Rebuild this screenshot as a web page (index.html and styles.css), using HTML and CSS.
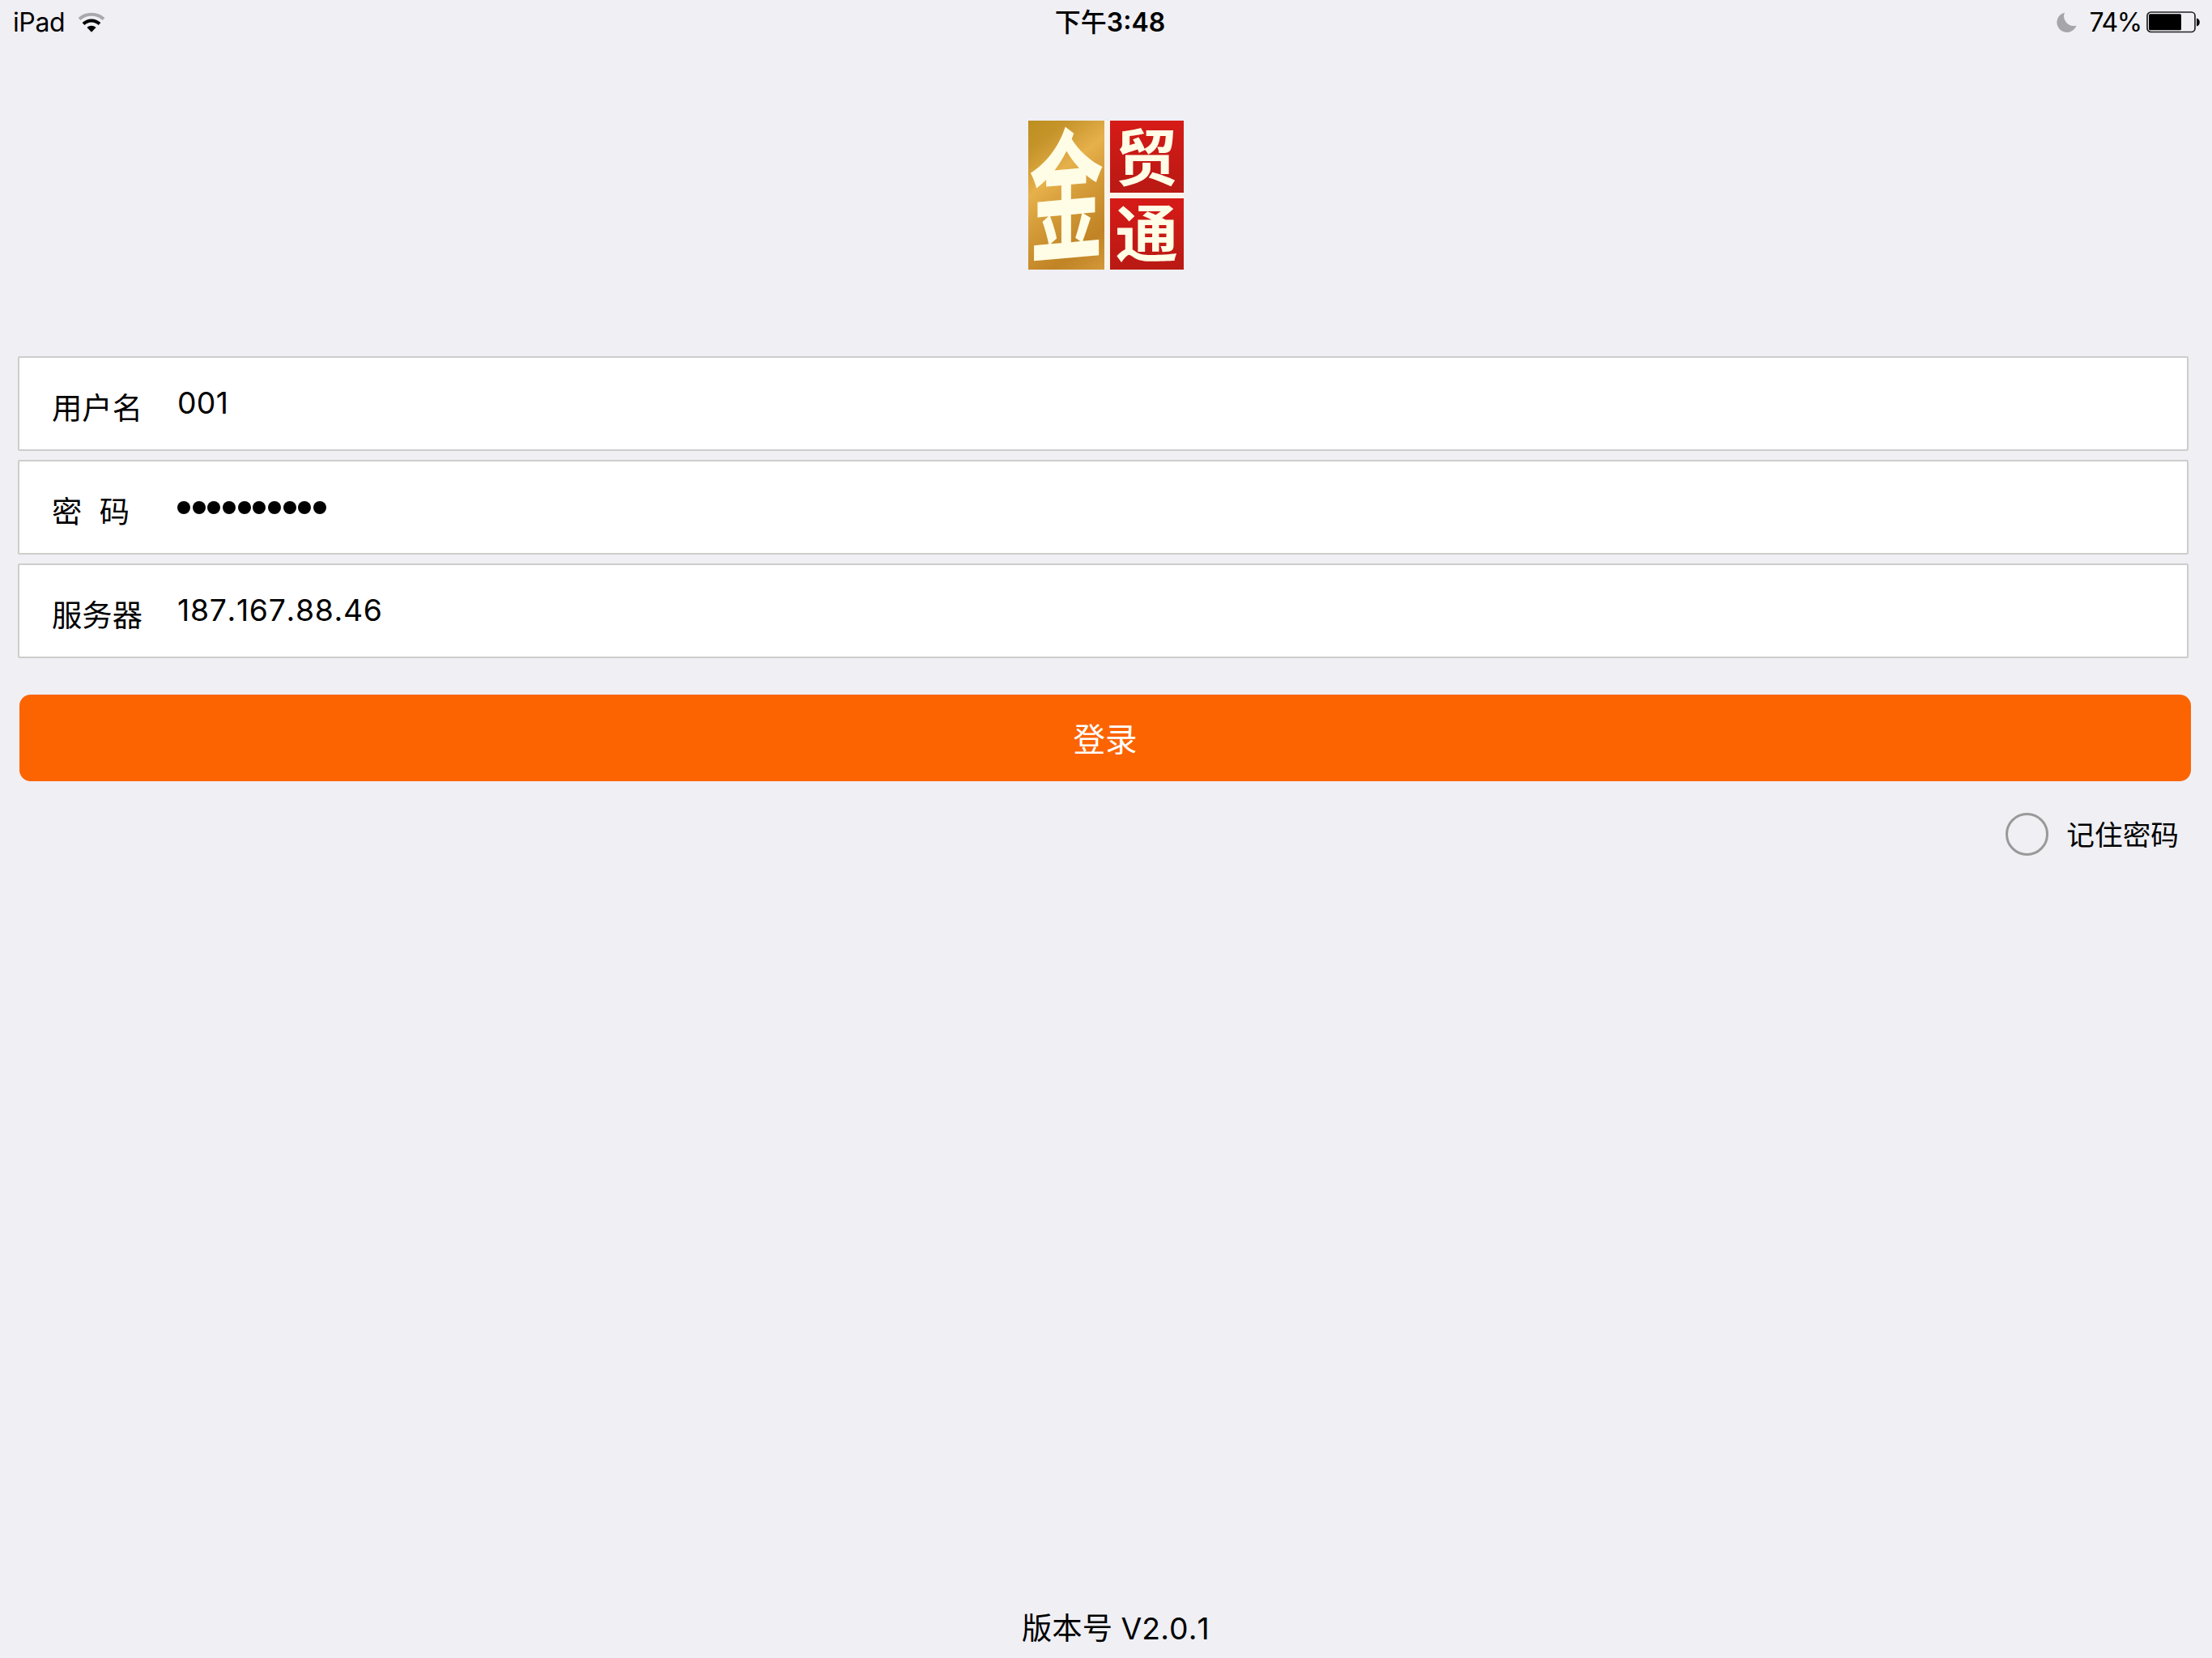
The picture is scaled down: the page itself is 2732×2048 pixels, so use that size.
FILE: index.html
```
<!DOCTYPE html>
<html lang="zh-CN">
<head>
<meta charset="utf-8">
<title>金贸通</title>
<link rel="stylesheet" href="styles.css">
</head>
<body>
<div class="screen">
  <header class="status">
    <div class="status-left">
      <span class="device">iPad</span>
      <svg class="wifi" width="34" height="26" viewBox="0 0 34 26" fill="none">
        <path d="M2 8.5C10.5 .8 23.500 .8 32 8.500" stroke="#a9a9ad" stroke-width="4"/>
        <path d="M7 14.500C12.500 9 21.500 9 27 14.500" stroke="#000" stroke-width="4"/>
        <path d="M11.500 19C14.500 16 19.500 16 22.500 19L17 24.800Z" fill="#000"/>
      </svg>
    </div>
    <div class="clock">下午<b>3:48</b></div>
    <div class="status-right">
      <svg class="moon" width="25" height="25" viewBox="0 0 25 25"><path d="M10 .5A12.400 12.400 0 1 0 24.600 16.500A12 12 0 0 1 10 .5Z" fill="#a5a5aa"/></svg>
      <span class="percent">74%</span>
      <svg class="battery" width="67" height="27" viewBox="0 0 67 27">
        <rect x="1" y="1" width="59" height="24.500" rx="4.500" fill="none" stroke="#222" stroke-width="1.700"/>
        <rect x="3" y="3.200" width="40" height="20" rx="1.500" fill="#000"/>
        <path d="M62 8.500C67 9.500 67 17.500 62 18.500Z" fill="#000"/>
      </svg>
    </div>
  </header>

  <svg class="logo" width="192" height="184" viewBox="0 0 192 184">
    <defs>
      <linearGradient id="gold" gradientUnits="userSpaceOnUse" x1="0" y1="0" x2="127" y2="159">
        <stop offset="0" stop-color="#bd8f20"/>
        <stop offset=".15" stop-color="#c5942a"/>
        <stop offset=".36" stop-color="#e6b04b"/>
        <stop offset=".55" stop-color="#d39a37"/>
        <stop offset=".8" stop-color="#c08325"/>
        <stop offset="1" stop-color="#d3993a"/>
      </linearGradient>
      <linearGradient id="red" x1="0" y1="0" x2="0" y2="1">
        <stop offset="0" stop-color="#d61b17"/>
        <stop offset="1" stop-color="#b91914"/>
      </linearGradient>
    </defs>
    <rect width="192" height="184" fill="#fbf4ea"/>
    <rect width="94" height="184" fill="url(#gold)"/>
    <rect x="101" width="91" height="89" fill="url(#red)"/>
    <rect x="101" y="96" width="91" height="88" fill="url(#red)"/>
    <text class="logo-brush" transform="translate(1 162) skewY(-5) scale(1 1.900)" font-size="92">金</text>
    <text class="logo-seal" transform="translate(107.500 73.500) scale(1.020 1)" font-size="76">贸</text>
    <text class="logo-seal" transform="translate(107.500 168) scale(1.020 1)" font-size="76">通</text>
  </svg>

  <main class="form">
    <div class="field"><label class="label">用户名</label><span class="value">001</span></div>
    <div class="field">
      <label class="label label-wide">密码</label>
      <span class="dots"><i></i><i></i><i></i><i></i><i></i><i></i><i></i><i></i><i></i><i></i></span>
    </div>
    <div class="field"><label class="label">服务器</label><span class="value address">187.167.88.46</span></div>
  </main>
  <button class="login">登录</button>
  <div class="remember"><span class="radio"></span><span class="remember-text">记住密码</span></div>
  <footer class="version">版本号 <span class="version-number">V2.0.1</span></footer>
</div>
</body>
</html>
```
FILE: styles.css
```
* { box-sizing: border-box; }
body {
  margin: 0;
  background: #efeff4;
  color: #000;
  font-family: Inter, "Noto Sans CJK SC", sans-serif;
}
.screen {
  width: 2732px;
  height: 2048px;
  display: flex;
  flex-direction: column;
}
.status {
  height: 54px;
  padding: 0 14px 0 16px;
  display: grid;
  grid-template-columns: 1fr auto 1fr;
  align-items: center;
  font-size: 32px;
  line-height: 54px;
}
.status-left, .status-right { display: flex; align-items: center; }
.status-right { justify-content: flex-end; }
.device { padding-top: 1px; letter-spacing: -.4px; }
.wifi { margin-left: 16px; }
.clock { font-weight: 500; padding: 1px 0 0 8px; }
.clock b { font-weight: 600; }
.moon { margin-right: 16px; }
.percent { margin-right: 6px; padding-top: 1px; letter-spacing: -1.3px; }
.logo { margin: 95px 0 0 1270px; display: block; overflow: visible; }
.logo-brush, .logo-seal { font-family: "Noto Sans CJK SC", sans-serif; fill: #fffde6; }
.logo-brush, .logo-seal { font-weight: 700; }
.form {
  margin: 107px 29px 0 22px;
  display: flex;
  flex-direction: column;
  gap: 11px;
}
.field {
  height: 117px;
  padding-left: 40px;
  display: flex;
  border: 2px solid #cdcdcc;
  border-radius: 2px;
  background: #fff;
  font-size: 37.33px;
  line-height: 54px;
}
.label { width: 155px; padding-top: 36px; }
.label-wide { letter-spacing: 21.500px; }
.value { padding-top: 29px; letter-spacing: .3px; }
.address { font-kerning: none; letter-spacing: .7px; }
.dots { display: flex; gap: 2.67px; padding-top: 49px; }
.dots i { width: 16px; height: 16px; border-radius: 50%; background: #000; }
.login {
  height: 107px;
  margin: 45px 26px 0 24px;
  padding: 0 0 2px;
  border: 0;
  border-radius: 14px;
  background: #fb6400;
  color: #fff;
  font: 39.500px/105px "Noto Sans CJK SC", sans-serif;
}
.remember {
  height: 53px;
  margin: 39px 41px 0 0;
  display: flex;
  justify-content: flex-end;
  align-items: center;
  gap: 22px;
  font-size: 34.67px;
  line-height: 53px;
}
.radio { width: 53px; height: 53px; border: 3px solid #999; border-radius: 50%; }
.remember-text { padding-top: 2px; }
.version {
  margin: auto 0 9px 1262px;
  font-size: 37.33px;
  line-height: 54px;
}
.version-number { font-kerning: none; letter-spacing: .1px; }
```
